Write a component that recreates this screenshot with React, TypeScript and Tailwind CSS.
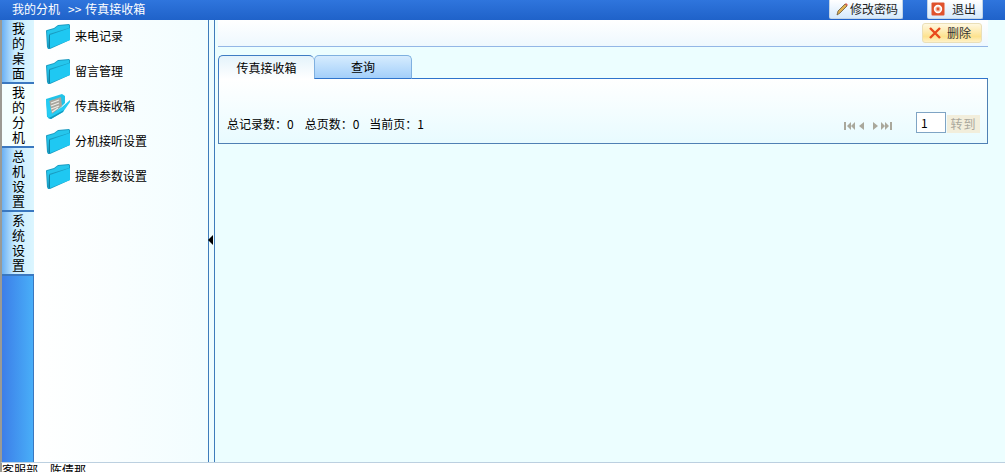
import React from "react";

const FONT = { fontFamily: '"Noto Sans CJK SC", "Liberation Sans", sans-serif' };

function Folder({ open }: { open?: boolean }) {
  if (open) {
    return (
      <svg width="24" height="25" viewBox="0 0 24 25" className="shrink-0">
        <path d="M0 5 L16 0 L19 2 L19 9 L4 24 L1 23 Z" fill="#22c3e8" />
        <path d="M3 7 L15 3 L16 12 L6 20 L5 20 Z" fill="#a8a69e" />
        <path d="M5 9 L13 6 M5 12 L13 9 M5 15 L13 12 M6 18 L12 14" stroke="#eeeeea" strokeWidth="1.2" />
        <path d="M0 6 L3 6 L6 20 L16 13 L24 6 L24 8 L17 18 L5 25 L2 24 Z" fill="#25ccf4" />
        <path d="M2 24 L5 25 L17 18 L18 16 L5 23 Z" fill="#1399bd" />
      </svg>
    );
  }
  return (
    <svg width="24" height="25" viewBox="0 0 24 25" className="shrink-0">
      <path d="M0 7 Q0 6 1 6 L8 4 L12 1 L23 0 L24 1 L24 16 L4 25 L2 25 L1 23 Z" fill="#1a9cc2" />
      <path d="M1 7 L8 5 L12 2 L23 1 L23 4 L3 10 L2 22 Z" fill="#25c6ec" />
      <path d="M4 11 L24 4 L24 16 L4 24 Z" fill="#1fc8f2" />
      <path d="M3 11 L4 11 L4 24 L3 24 Z" fill="#12809f" />
    </svg>
  );
}

function SideTab({ label, active }: { label: string; active?: boolean }) {
  return (
    <div
      className={
        "w-[32px] h-[64px] pl-[1px] flex items-center justify-center text-[13px] leading-[15px] text-black shrink-0 border-b-[2px] border-[#3a78c0] " +
        (active
          ? "bg-[#f4ffff]"
          : "bg-gradient-to-r from-[#6bb0f2] via-[#c8ecff] via-40% to-[#dcf6ff]")
      }
    >
      <span className="w-[13px] break-all -mt-[2px]">{label}</span>
    </div>
  );
}

function MenuItem({ label, open }: { label: string; open?: boolean }) {
  return (
    <div className="h-[35px] flex items-center gap-[5px] pl-[12px] text-[12px] text-black">
      <Folder open={open} />
      <span className="-mt-[2px]">{label}</span>
    </div>
  );
}

function TopButton({ children, label, w }: { children: React.ReactNode; label: string; w: string }) {
  return (
    <div
      className={
        "h-[19px] rounded-b-[2px] border border-t-0 border-[#c3d4e6] bg-gradient-to-b from-white to-[#d6eafc] flex items-center text-[12px] text-[#222] " +
        w
      }
    >
      {children}
      <span>{label}</span>
    </div>
  );
}

function Arrows() {
  const c = "#aaa89c";
  return (
    <svg width="48" height="10" viewBox="0 0 48 10" className="mr-[24px] mt-[6px]">
      <path d="M0 1h2v8H0zM7 1v8L3 5zM11 1v8L7 5z" fill={c} />
      <path d="M20 1v8l-5-4z" fill={c} />
      <path d="M29 1v8l5-4z" fill={c} />
      <path d="M37 1v8l4-4zM41 1v8l4-4zM46 1h2v8h-2z" fill={c} />
    </svg>
  );
}

export default function App() {
  return (
    <div className="w-[1005px] h-[472px] overflow-hidden flex flex-col bg-white" style={FONT}>
      <div className="h-[20px] shrink-0 bg-gradient-to-b from-[#2f75dd] to-[#1f62c9] flex items-center pl-[12px] text-[12px] text-white">
        <span className="-mt-[2px]">我的分机</span>
        <span className="ml-[8px] -mt-[2px]">&gt;&gt;</span>
        <span className="ml-[4px] -mt-[2px]">传真接收箱</span>
        <div className="ml-auto flex gap-[24px] pr-[22px] items-start h-full">
          <TopButton label="修改密码" w="w-[74px] pl-[5px] gap-[1px]">
            <svg width="14" height="14" viewBox="0 0 14 14">
              <path d="M2 13 L3 9 L10 2 L12 4 L5 11 Z" fill="#e0b050" stroke="#6a5a3a" strokeWidth="0.8" />
              <path d="M10 2 L12 4 L13 3 L11 1 Z" fill="#e06050" />
            </svg>
          </TopButton>
          <TopButton label="退出" w="w-[56px] pl-[3px] gap-[7px]">
            <svg width="14" height="14" viewBox="0 0 14 14">
              <rect x="0.5" y="0.5" width="13" height="13" rx="1" fill="#e0522c" />
              <circle cx="7" cy="7" r="3.4" fill="#f0b8a0" stroke="#fff" strokeWidth="1.6" />
              <circle cx="7" cy="7" r="1.4" fill="#e0522c" />
            </svg>
          </TopButton>
        </div>
      </div>

      <div className="h-[442px] shrink-0 flex">
        <div className="w-[2px] bg-[#9a9a94]" />
        <div className="w-[32px] flex flex-col bg-gradient-to-r from-[#3d7ee8] to-[#49aef8] border-r border-[#3a78c0]">
          <SideTab label="我的桌面" />
          <SideTab label="我的分机" active />
          <SideTab label="总机设置" />
          <SideTab label="系统设置" />
        </div>

        <div className="w-[174px] bg-gradient-to-r from-white to-[#f2fdff]">
          <div className="-mt-[1px]">
            <MenuItem label="来电记录" />
            <MenuItem label="留言管理" />
            <MenuItem label="传真接收箱" open />
            <MenuItem label="分机接听设置" />
            <MenuItem label="提醒参数设置" />
          </div>
        </div>

        <div className="w-[7px] border-x border-[#3f7cbb] bg-[#eefdff] flex items-center">
          <div className="w-0 h-0 -ml-[1px] -mt-[2px] border-y-[5px] border-y-transparent border-r-[5px] border-r-black" />
        </div>

        <div className="flex-1 bg-[#ecfeff] flex flex-col">
          <div className="h-[27px] ml-[3px] mr-[17px] pr-[6px] flex justify-end items-start border-b border-[#93b6e6] bg-gradient-to-b from-white to-[#eef8fe]">
            <div className="mt-[3px] w-[60px] h-[20px] pl-[5px] rounded-[3px] border border-[#eadfb8] bg-gradient-to-b from-[#fff8e0] via-[#fde28e] via-70% to-[#fff2c8] flex items-center gap-[5px] text-[12px] text-[#333]">
              <svg width="14" height="14" viewBox="0 0 14 14">
                <path d="M2 2 L12 12 M12 2 L2 12" stroke="#e8481c" strokeWidth="2.4" />
              </svg>
              <span>删除</span>
            </div>
          </div>

          <div className="ml-[3px] mr-[17px] mt-[8px]">
            <div className="flex h-[24px] items-end">
              <div className="w-[96px] h-[24px] rounded-t-[5px] border-t border-l border-[#3f7cc4] bg-gradient-to-b from-[#e4f3fb] to-white flex items-center justify-center text-[12px] text-black">
                传真接收箱
              </div>
              <div className="w-[98px] h-[24px] rounded-t-[5px] border border-[#7fb0e0] border-b-[#2f74cc] bg-gradient-to-b from-[#d6ecfe] to-[#a3cffa] flex items-center justify-center text-[12px] text-black">
                查询
              </div>
              <div className="flex-1 border-b border-[#2f74cc]" />
            </div>
            <div className="h-[65px] border border-t-0 border-[#4f80b4] bg-gradient-to-b from-white to-[#e8fbff] flex items-end pb-[10px] pl-[8px] text-[12px] leading-[18px] text-black">
              <span>总记录数：0</span>
              <span className="ml-[11px]">总页数：0</span>
              <span className="ml-[10px]">当前页：1</span>
              <div className="ml-auto flex items-center pr-[7px] h-[21px]">
                <Arrows />
                <div className="w-[30px] h-[21px] border border-[#7fa4c4] bg-white text-[12px] text-black pl-[4px] leading-[19px]">1</div>
                <div className="w-[33px] h-[18px] ml-[1px] mt-[2px] bg-[#f2eedc] text-[12px] leading-[18px] text-[#aaa89c] tracking-[1px] flex items-center justify-center">转到</div>
              </div>
            </div>
          </div>
        </div>
      </div>

      <div className="flex-1 border-t border-[#bcd0e0] text-[12px] leading-[14px] text-black overflow-hidden border-l-[2px] border-l-[#9a9a94]">
        客服部　陈倩那
      </div>
    </div>
  );
}
